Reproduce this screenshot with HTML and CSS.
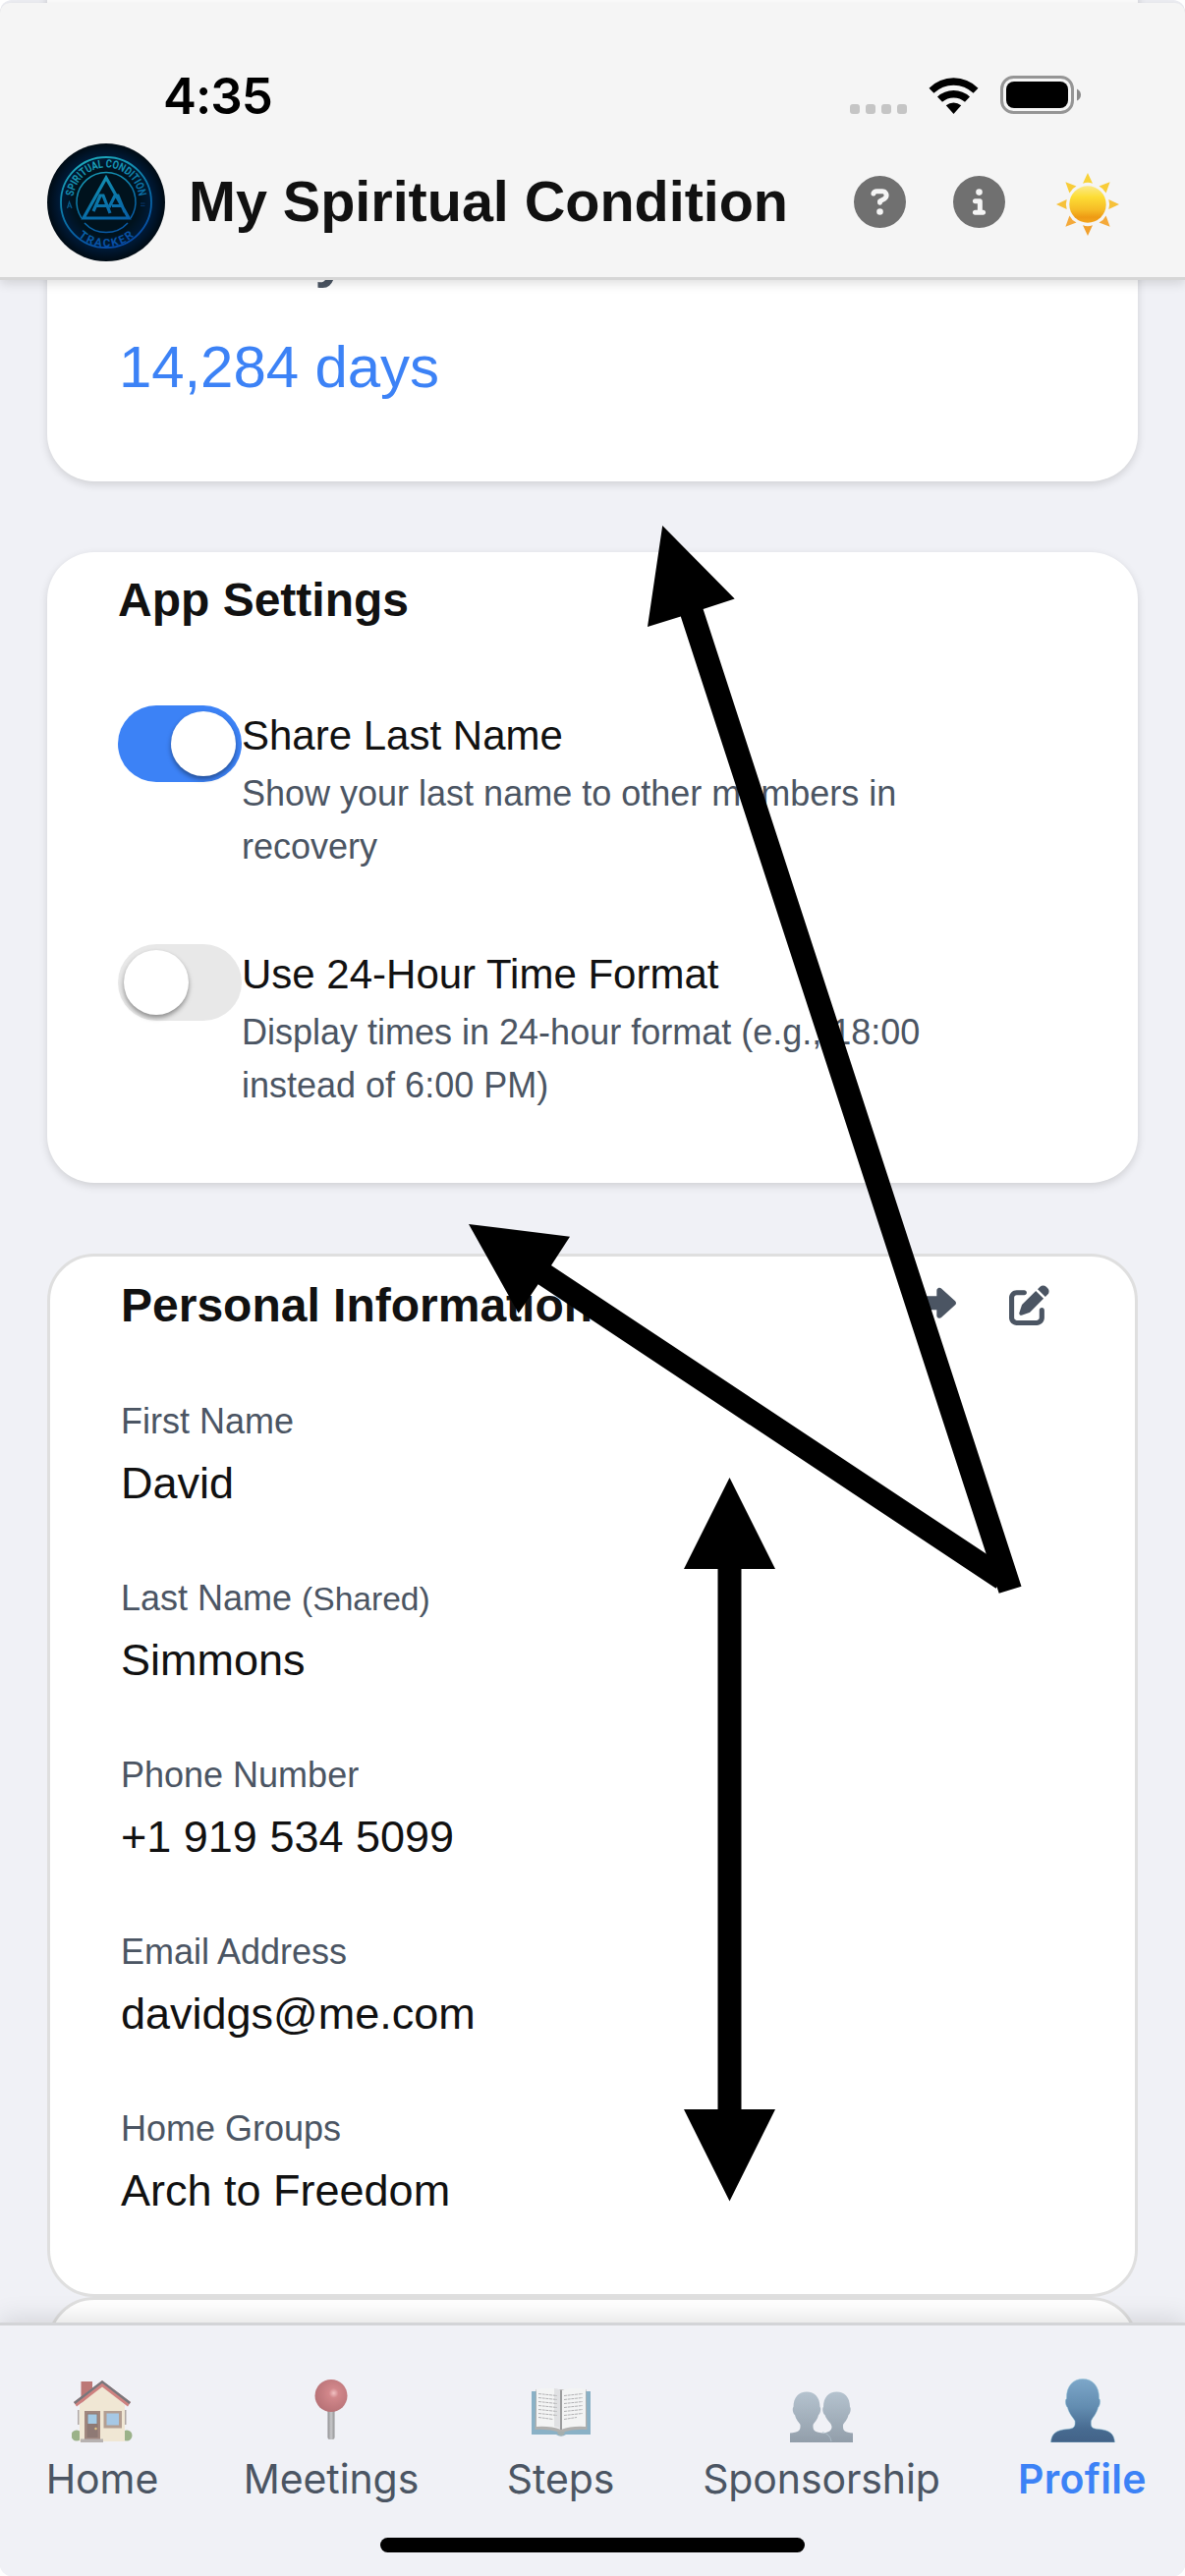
FILE: index.html
```html
<!DOCTYPE html>
<html lang="en">
<head>
<meta charset="utf-8">
<title>My Spiritual Condition</title>
<link rel="stylesheet" href="styles.css">
</head>
<body>
<div class="screen">
  <header class="app-header">
    <div class="status-bar">
      <span class="time">4:35</span>
      <div class="status-icons">
        <span class="signal"><i></i><i></i><i></i><i></i></span>
        <svg class="wifi" viewBox="0 0 51 38" width="51" height="38">
          <path d="M0.5 10.8Q11 0.3 25.500 0.3Q40 0.3 50.500 10.800L45.600 15.800Q37 7.700 25.500 7.700Q14 7.700 5.400 15.800Z"/>
          <path d="M9 19.500Q16 13 25.500 13Q35 13 42 19.500L37 24.700Q32 20.400 25.500 20.400Q19 20.400 14 24.700Z"/>
          <path d="M17.800 28.300Q21.300 25.500 25.500 25.500Q29.700 25.500 33.200 28.300L25.500 37Z"/>
        </svg>
        <svg class="battery" viewBox="0 0 83 40" width="83" height="40">
          <rect x="1.500" y="1.500" width="72" height="36" rx="12" fill="none" stroke="#959595" stroke-width="3"/>
          <rect x="6" y="6" width="63" height="27" rx="8"/>
          <path d="M78 13.500Q82 15.500 82 19.500Q82 23.500 78 25.500Z" fill="#8a8a8a"/>
        </svg>
      </div>
    </div>
    <div class="brand-row">
      <svg class="logo" viewBox="0 0 120 120" width="120" height="120">
        <defs>
          <radialGradient id="disc"><stop offset=".55" stop-color="#00121d"/><stop offset=".78" stop-color="#001a38"/><stop offset="1" stop-color="#000b14"/></radialGradient>
          <linearGradient id="neon" gradientUnits="userSpaceOnUse" x1="35" y1="12" x2="75" y2="110"><stop offset="0" stop-color="#1fb0bd"/><stop offset=".5" stop-color="#0a74a8"/><stop offset="1" stop-color="#0745a4"/></linearGradient>
          <path id="arc-top" d="M26.500 58A33.500 33.500 0 0 1 93.500 58"/>
          <path id="arc-bottom" d="M18.500 72A42.500 42.500 0 0 0 101.500 72"/>
        </defs>
        <circle cx="60" cy="60" r="60" fill="url(#disc)"/>
        <circle cx="60" cy="60" r="46" fill="none" stroke="url(#neon)" stroke-width="1.800"/>
        <path d="M35 76A30 30 0 1 1 85 76M38 81A30 30 0 0 0 82 81" fill="none" stroke="url(#neon)" stroke-width="1.500"/>
        <path d="M60 35L83 76H37Z M47 69L54 53H57L64 71 M50 63.500H60 M63 65L69 53H72L79 70 M66 63.500H75" fill="none" stroke="url(#neon)" stroke-width="3.200"/>
        <text class="logo-text" fill="url(#neon)"><textPath href="#arc-top" startOffset="50%" text-anchor="middle" textLength="97" lengthAdjust="spacingAndGlyphs">SPIRITUAL CONDITION</textPath></text>
        <text class="logo-text" fill="url(#neon)"><textPath href="#arc-bottom" startOffset="50%" text-anchor="middle" textLength="62">TRACKER</textPath></text>
        <path d="M20.500 66L22.500 59.500L25 66M21.300 64H24.300" fill="none" stroke="#07598a" stroke-width="1.200"/>
        <path d="M95 61H99.500M95 63.500H99.500" fill="none" stroke="#063469" stroke-width="1.200"/>
      </svg>
      <h1 class="app-title">My Spiritual Condition</h1>
      <div class="header-actions">
        <svg viewBox="0 0 512 512" width="53" height="53" fill="#707070"><path fill-rule="evenodd" d="M256 512A256 256 0 1 0 256 0a256 256 0 1 0 0 512zM169.800 165.300c7.900-22.300 29.100-37.300 52.800-37.300h58.300c34.900 0 63.100 28.300 63.100 63.100c0 22.600-12.100 43.500-31.700 54.800L280 264.400c-.2 13-10.900 23.600-24 23.600c-13.300 0-24-10.700-24-24V250.500c0-8.600 4.600-16.500 12.100-20.800l44.300-25.400c4.700-2.700 7.600-7.700 7.600-13.100c0-8.400-6.800-15.100-15.100-15.100H222.600c-3.400 0-6.400 2.100-7.500 5.300l-.4 1.200c-4.400 12.500-18.200 19-30.600 14.600s-19-18.200-14.600-30.600l.3-1.200zM224 352a32 32 0 1 1 64 0 32 32 0 1 1-64 0z"/></svg>
        <svg viewBox="0 0 512 512" width="53" height="53" fill="#707070"><path fill-rule="evenodd" d="M256 512A256 256 0 1 0 256 0a256 256 0 1 0 0 512zM216 336h24V272H216c-13.300 0-24-10.700-24-24s10.700-24 24-24h48c13.300 0 24 10.700 24 24v88h8c13.300 0 24 10.700 24 24s-10.700 24-24 24H216c-13.300 0-24-10.700-24-24s10.700-24 24-24zm40-208a32 32 0 1 1 0 64 32 32 0 1 1 0-64z"/></svg>
        <svg class="sun" viewBox="-32 -32 64 64" width="64" height="64">
          <defs>
            <linearGradient id="sun-body" x1="0" y1="0" x2="0" y2="1"><stop offset="0" stop-color="#fbe989"/><stop offset=".3" stop-color="#fddd35"/><stop offset=".65" stop-color="#f6bb25"/><stop offset=".85" stop-color="#ee9a14"/><stop offset="1" stop-color="#f3a51c"/></linearGradient>
            <path id="ray" d="M0-32L5-21.300Q0-23-5-21.300Z"/>
          </defs>
          <circle r="18.700" fill="url(#sun-body)"/>
          <use href="#ray" fill="#f8d238"/>
          <use href="#ray" fill="#f8cc38" transform="rotate(45)"/>
          <use href="#ray" fill="#f6c13a" transform="rotate(90)"/>
          <use href="#ray" fill="#f4a93a" transform="rotate(135)"/>
          <use href="#ray" fill="#f1a02c" transform="rotate(180)"/>
          <use href="#ray" fill="#f4a93a" transform="rotate(225)"/>
          <use href="#ray" fill="#f6c13a" transform="rotate(270)"/>
          <use href="#ray" fill="#f8cc38" transform="rotate(315)"/>
        </svg>
      </div>
    </div>
  </header>

  <main class="content">
    <section class="card sobriety">
      <h2 class="sobriety-label">Sobriety</h2>
      <p class="sobriety-days">14,284 days</p>
    </section>

    <section class="card settings">
      <h2 class="card-title">App Settings</h2>
      <div class="setting">
        <span class="toggle on"><span class="knob"></span></span>
        <div class="setting-text">
          <p class="setting-name">Share Last Name</p>
          <p class="setting-desc">Show your last name to other members in recovery</p>
        </div>
      </div>
      <div class="setting">
        <span class="toggle"><span class="knob"></span></span>
        <div class="setting-text">
          <p class="setting-name">Use 24-Hour Time Format</p>
          <p class="setting-desc">Display times in 24-hour format (e.g., 18:00 instead of 6:00 PM)</p>
        </div>
      </div>
    </section>

    <section class="card outlined personal">
      <div class="card-head">
        <h2 class="card-title">Personal Information</h2>
        <div class="card-actions">
          <svg class="share" viewBox="0 0 512 512" width="45" height="45"><path d="M307 34.800c-11.500 5.100-19 16.600-19 29.200v64H176C78.800 128 0 206.800 0 304C0 417.300 81.500 467.900 100.200 478.100c2.500 1.400 5.300 1.900 8.100 1.900c10.900 0 19.700-8.900 19.700-19.700c0-7.500-4.300-14.400-9.800-19.500C108.800 431.900 96 414.400 96 384c0-53 43-96 96-96h96v64c0 12.600 7.400 24.100 19 29.200s25 3 34.400-5.400l160-144c6.700-6.100 10.600-14.700 10.600-23.800s-3.800-17.700-10.600-23.800l-160-144c-9.400-8.500-22.900-10.600-34.400-5.400z"/></svg>
          <svg class="edit" viewBox="0 0 512 512" width="41" height="41"><path d="M471.600 21.700c-21.900-21.900-57.300-21.900-79.200 0L362.300 51.700l97.900 97.900 30.100-30.100c21.900-21.900 21.900-57.300 0-79.200L471.600 21.700zm-299.200 220c-6.100 6.100-10.800 13.600-13.500 21.900l-29.600 88.800c-2.900 8.600-.6 18.100 5.800 24.600s15.900 8.700 24.600 5.800l88.800-29.600c8.200-2.700 15.700-7.400 21.900-13.500L437.700 172.300 339.700 74.300 172.400 241.700zM96 64C43 64 0 107 0 160L0 416c0 53 43 96 96 96l256 0c53 0 96-43 96-96l0-96c0-17.700-14.300-32-32-32s-32 14.300-32 32l0 96c0 17.700-14.300 32-32 32L96 448c-17.700 0-32-14.300-32-32l0-256c0-17.700 14.300-32 32-32l96 0c17.700 0 32-14.300 32-32s-14.300-32-32-32L96 64z"/></svg>
        </div>
      </div>
      <dl class="fields">
        <div class="field"><dt>First Name</dt><dd>David</dd></div>
        <div class="field"><dt>Last Name <small>(Shared)</small></dt><dd>Simmons</dd></div>
        <div class="field"><dt>Phone Number</dt><dd>+1 919 534 5099</dd></div>
        <div class="field"><dt>Email Address</dt><dd>davidgs@me.com</dd></div>
        <div class="field"><dt>Home Groups</dt><dd>Arch to Freedom</dd></div>
      </dl>
    </section>

    <section class="card outlined next-card"></section>
  </main>

  <nav class="tab-bar">
    <a class="tab">
      <svg class="dim" viewBox="0 0 62 65" width="62" height="65">
        <circle cx="5" cy="58" r="5.500" fill="#6f9150"/><circle cx="56" cy="58" r="5.500" fill="#6f9150"/>
        <path d="M9.500 3H21V17L9.500 25Z" fill="#a13733"/>
        <path d="M8 27L31 6L54 27V64H8Z" fill="#f0e2c2"/>
        <path d="M6 32H7.500V47H6ZM54 32H55.500V47H54Z" fill="#8d8279"/>
        <path d="M2 24L31 2L60 24L57 28.500L31 8.500L5 28.500Z" fill="#bd4641"/>
        <path d="M2 24L31 2L60 24L58.500 26L31 4.800L3.500 26Z" fill="#38373b"/>
        <path d="M13 33H29V62H13Z" fill="#76503f"/><path d="M15.500 35.500H26.500V60H15.500Z" fill="#5a3a30"/><path d="M16.500 36.500H25.500V46H16.500Z" fill="#7db6dd"/>
        <circle cx="24.500" cy="51" r="1.200" fill="#e3b44c"/>
        <path d="M32.500 33H51V50.500H32.500Z" fill="#94735d"/><path d="M35.500 35.500H48V47.500H35.500Z" fill="#7fb3dc"/>
        <path d="M9 61.500H32V65H9Z" fill="#99918d"/>
      </svg>
      <span>Home</span>
    </a>
    <a class="tab">
      <svg class="dim" viewBox="0 0 34 65" width="34" height="65">
        <defs>
          <radialGradient id="pin-head" cx=".58" cy=".42" r=".6"><stop offset="0" stop-color="#f2a8a8"/><stop offset=".25" stop-color="#c24f52"/><stop offset="1" stop-color="#9a2f33"/></radialGradient>
          <linearGradient id="pin-needle"><stop offset="0" stop-color="#5a5a5a"/><stop offset=".5" stop-color="#b4b4b4"/><stop offset="1" stop-color="#5f5f5f"/></linearGradient>
        </defs>
        <rect x="13.500" y="30" width="7" height="32" rx="2" fill="url(#pin-needle)"/>
        <circle cx="17" cy="17.500" r="16.500" fill="url(#pin-head)"/>
      </svg>
      <span>Meetings</span>
    </a>
    <a class="tab">
      <svg class="dim" viewBox="0 0 62 65" width="62" height="65">
        <path d="M1 13H61V57H36Q31 60 26 57H1Z" fill="#5590ad"/>
        <path d="M4.500 52L5.500 11H56.500L57.500 52Q45 51 31 55Q17 51 4.500 52Z" fill="#8f8e89"/>
        <path d="M6 11Q20 8 31 12Q42 8 56 11V49Q42 48 31 52Q20 48 6 49Z" fill="#f6f6f4"/>
        <path d="M24 10Q29 10 31 13V52Q28 49 24 49Z" fill="#d9d9d9"/><path d="M31 12V52" stroke="#606060" stroke-width="1.800"/>
        <path d="M8 15.500L27 17.500M8 19.500L27 21.500M8 23.500L27 25.500M8 27.500L27 29.500M8 31.500L27 33.500M8 35.500L27 37.500M8 39.500L23 41.500M34 17.500L53 15.500M34 21.500L53 19.500M34 25.500L53 23.500M34 29.500L53 27.500M34 33.500L53 31.500M34 37.500L53 35.500M34 41.500L47 39.500" stroke="#909090" stroke-width="1" stroke-dasharray="3 .7"/>
        <path d="M27 54.500Q31 53 35 54.500Q34 58.500 31 58.500Q28 58.500 27 54.500Z" fill="#7e8d89"/>
      </svg>
      <span>Steps</span>
    </a>
    <a class="tab">
      <svg viewBox="0 0 64 65" width="64" height="65">
        <defs><linearGradient id="people" gradientUnits="userSpaceOnUse" x1="0" y1="13" x2="0" y2="65"><stop offset="0" stop-color="#b5c3cf"/><stop offset="1" stop-color="#929eaa"/></linearGradient></defs>
        <path d="M47.500 13.500C55.500 13.500 61 19 61 29C62.500 30 61.500 36 59.500 37C58.500 42 55 45 54 47C53.500 54 56 54.500 64 55.500V65H35V55.500Q42 54 42.500 50C43 45 37 43 35.500 37C33.500 36 32.500 30 34 29C34 19 39.500 13.500 47.500 13.500Z" fill="url(#people)"/>
        <path d="M17 13.500C25 13.500 30.500 19 30.500 29C32 30 31 36 29 37C28 42 24.500 45 23.500 47C23 54 26 54.500 34 55.500Q41 57 42 65H0V55.500C8 54.500 11 54 10.500 47C9.500 45 6 42 5 37C3 36 2 30 3.500 29C3.500 19 9 13.500 17 13.500Z" fill="url(#people)"/>
        <path d="M33 54.600Q41 56.500 42 64" fill="none" stroke="#b3c3cf" stroke-width=".8"/>
      </svg>
      <span>Sponsorship</span>
    </a>
    <a class="tab active">
      <svg viewBox="0 0 66 65" width="66" height="65">
        <defs><linearGradient id="person" x1="0" y1="0" x2="0" y2="1"><stop offset="0" stop-color="#7da7c9"/><stop offset=".45" stop-color="#628cb0"/><stop offset=".8" stop-color="#476a90"/><stop offset="1" stop-color="#436388"/></linearGradient></defs>
        <path d="M33 .5C43 .5 50 8 49.500 20.500C51.500 21.500 50.500 28 48.500 29.500C47.500 35 42.500 40.500 41.500 43C41 49 41.500 51 49 51.500C60 52.500 65 56 65.500 65H.5C1 56 6 52.500 17 51.500C24.500 51 25.500 49 25 43C23.500 40.500 18.500 35 17.500 29.500C15.500 28 14.500 21.500 16.500 20.500C16 8 23 .5 33 .5Z" fill="url(#person)" stroke="#8cc0d6" stroke-width=".5"/>
      </svg>
      <span>Profile</span>
    </a>
    <div class="home-indicator"></div>
  </nav>

  <svg class="annotations" viewBox="0 0 1206 2622" width="1206" height="2622">
    <path d="M674.200 535L747.700 609.600L715.600 620L1039.500 1614.700L1016.700 1621.700L692.800 627.500L659 638Z"/>
    <path d="M477 1246L580 1258.700L561 1288L1027 1597L1013.600 1616.700L547.700 1307.300L527.700 1336.700Z"/>
    <path d="M742.500 1504L789 1597H754.500V2147H789L742.500 2240.500L696 2147H730.500V1597H696Z"/>
  </svg>
</div>
</body>
</html>
```
FILE: styles.css
```css
* { box-sizing: border-box; margin: 0; padding: 0; }

html { background: #fff; }

body {
  width: 1206px;
  height: 2622px;
  overflow: hidden;
  font-family: "Liberation Sans", Arial, Helvetica, sans-serif;
  color: #111;
}

svg { display: block; flex: none; }

.screen {
  position: relative;
  height: 2622px;
  overflow: hidden;
  border-radius: 12px;
  background: #f0f1f6;
}

/* Header, floating over the scrolled content */
.app-header {
  position: absolute;
  z-index: 2;
  inset: 3px 0 auto 0;
  display: flex;
  flex-direction: column;
  height: 282px;
  background: #f5f5f5;
  border-bottom: 3px solid #d6d6d6;
  border-radius: 10px 10px 0 0;
  box-shadow: 0 3px 12px rgba(0, 0, 0, .14);
}

.status-bar {
  display: flex;
  align-items: flex-end;
  justify-content: space-between;
  height: 143px;
  padding: 0 105px 29px 166px;
}

.time {
  font: 600 51px/37px Inter, sans-serif;
  letter-spacing: -1px;
  color: #000;
  margin-bottom: 1px;
}

.status-icons { display: flex; align-items: flex-end; }
.signal { display: flex; gap: 6px; margin: 0 22px 1px 0; }
.signal i { width: 10px; height: 10px; border-radius: 3px; background: #c5c5c5; }
.battery { margin-left: 22px; }

.brand-row {
  display: flex;
  align-items: center;
  padding: 0 67px 0 48px;
}

.logo-text { font: 700 11.500px Roboto, sans-serif; }

.app-title {
  margin-left: 24px;
  font-size: 57.600px;
  line-height: 118px;
  padding-bottom: 2px;
  letter-spacing: -.05px;
  white-space: nowrap;
}

.header-actions {
  display: flex;
  align-items: center;
  gap: 48px;
  margin: -2px 0 0 auto;
}
.sun { margin: 5px 0 0 4px; }

/* Cards */
.content { padding: 0 48px; }

.card {
  border-radius: 48px;
  background: #fff;
  padding: 13px 72px 72px;
  box-shadow: 0 3px 9px rgba(0, 0, 0, .14);
}

.card.outlined {
  border: 3px solid #dfdfdf;
  box-shadow: none;
}

.sobriety {
  height: 590px;
  margin-top: -100px;
  margin-bottom: 72px;
  padding-top: 325px;
}
.sobriety-label { font-size: 57.600px; line-height: 72px; padding-left: 2px; color: #4b5563; }
.sobriety-days { margin-top: 32px; padding-left: 1px; font-size: 60px; line-height: 90px; letter-spacing: -.1px; color: #3c82f6; }

.card-title { font-size: 48px; line-height: 72px; white-space: nowrap; }

.settings { margin-bottom: 72px; }
.setting { display: flex; margin-top: 72px; }
.settings .card-title + .setting { margin-top: 71px; }

.toggle {
  flex: none;
  display: flex;
  width: 126px;
  height: 78px;
  padding: 6px;
  border-radius: 39px;
  background: #e8e8e8;
}
.toggle.on { justify-content: flex-end; background: #3c82f6; }
.knob {
  width: 66px;
  height: 66px;
  border-radius: 50%;
  background: #fff;
  box-shadow: 0 3px 5px rgba(0, 0, 0, .4);
}

.setting-text { width: 760px; }
.setting-name { font-size: 42px; line-height: 61px; }
.setting-desc { margin-top: 2px; font-size: 36px; line-height: 54px; color: #4b5563; }

.personal { padding-top: 14px; }
.card-head { display: flex; justify-content: space-between; align-items: center; }
.card-actions { display: flex; gap: 54px; padding-right: 15px; fill: #4b5563; }
.card-actions .share { margin-top: 3px; }
.card-actions .edit { margin-top: 3px; }

.fields { display: flex; flex-direction: column; gap: 56px; margin-top: 55px; }
.field dt { font-size: 36px; line-height: 54px; height: 54px; color: #4b5563; }
.field small { font-size: 33.600px; }
.field dd { margin-top: 2px; font-size: 45px; line-height: 68px; }
.fields { margin-bottom: -1px; }

.next-card { height: 200px; }

/* Tab bar */
.tab-bar {
  position: absolute;
  z-index: 2;
  inset: auto 0 0 0;
  display: grid;
  grid-template-columns: 208px 258px 209px 322px 209px;
  grid-template-rows: 128px auto;
  height: 258px;
  padding-top: 54px;
  background: #f0f1f6;
  border-top: 3px solid #d3d4d7;
  box-shadow: 0 -4px 24px rgba(0, 0, 0, .12);
}

.tab {
  display: flex;
  flex-direction: column;
  align-items: center;
  gap: 12px;
  font: 400 41px/50px Inter, sans-serif;
  letter-spacing: -.1px;
  color: #4b5563;
}
.tab.active { font-weight: 600; letter-spacing: .3px; color: #3c82f6; }
.tab .dim { opacity: .65; }

.home-indicator {
  grid-column: 1 / -1;
  justify-self: center;
  width: 432px;
  height: 15px;
  margin-top: 34px;
  border-radius: 8px;
  background: #000;
}

/* Arrows drawn over the whole screen */
.annotations { position: absolute; z-index: 3; inset: 0; }
```
